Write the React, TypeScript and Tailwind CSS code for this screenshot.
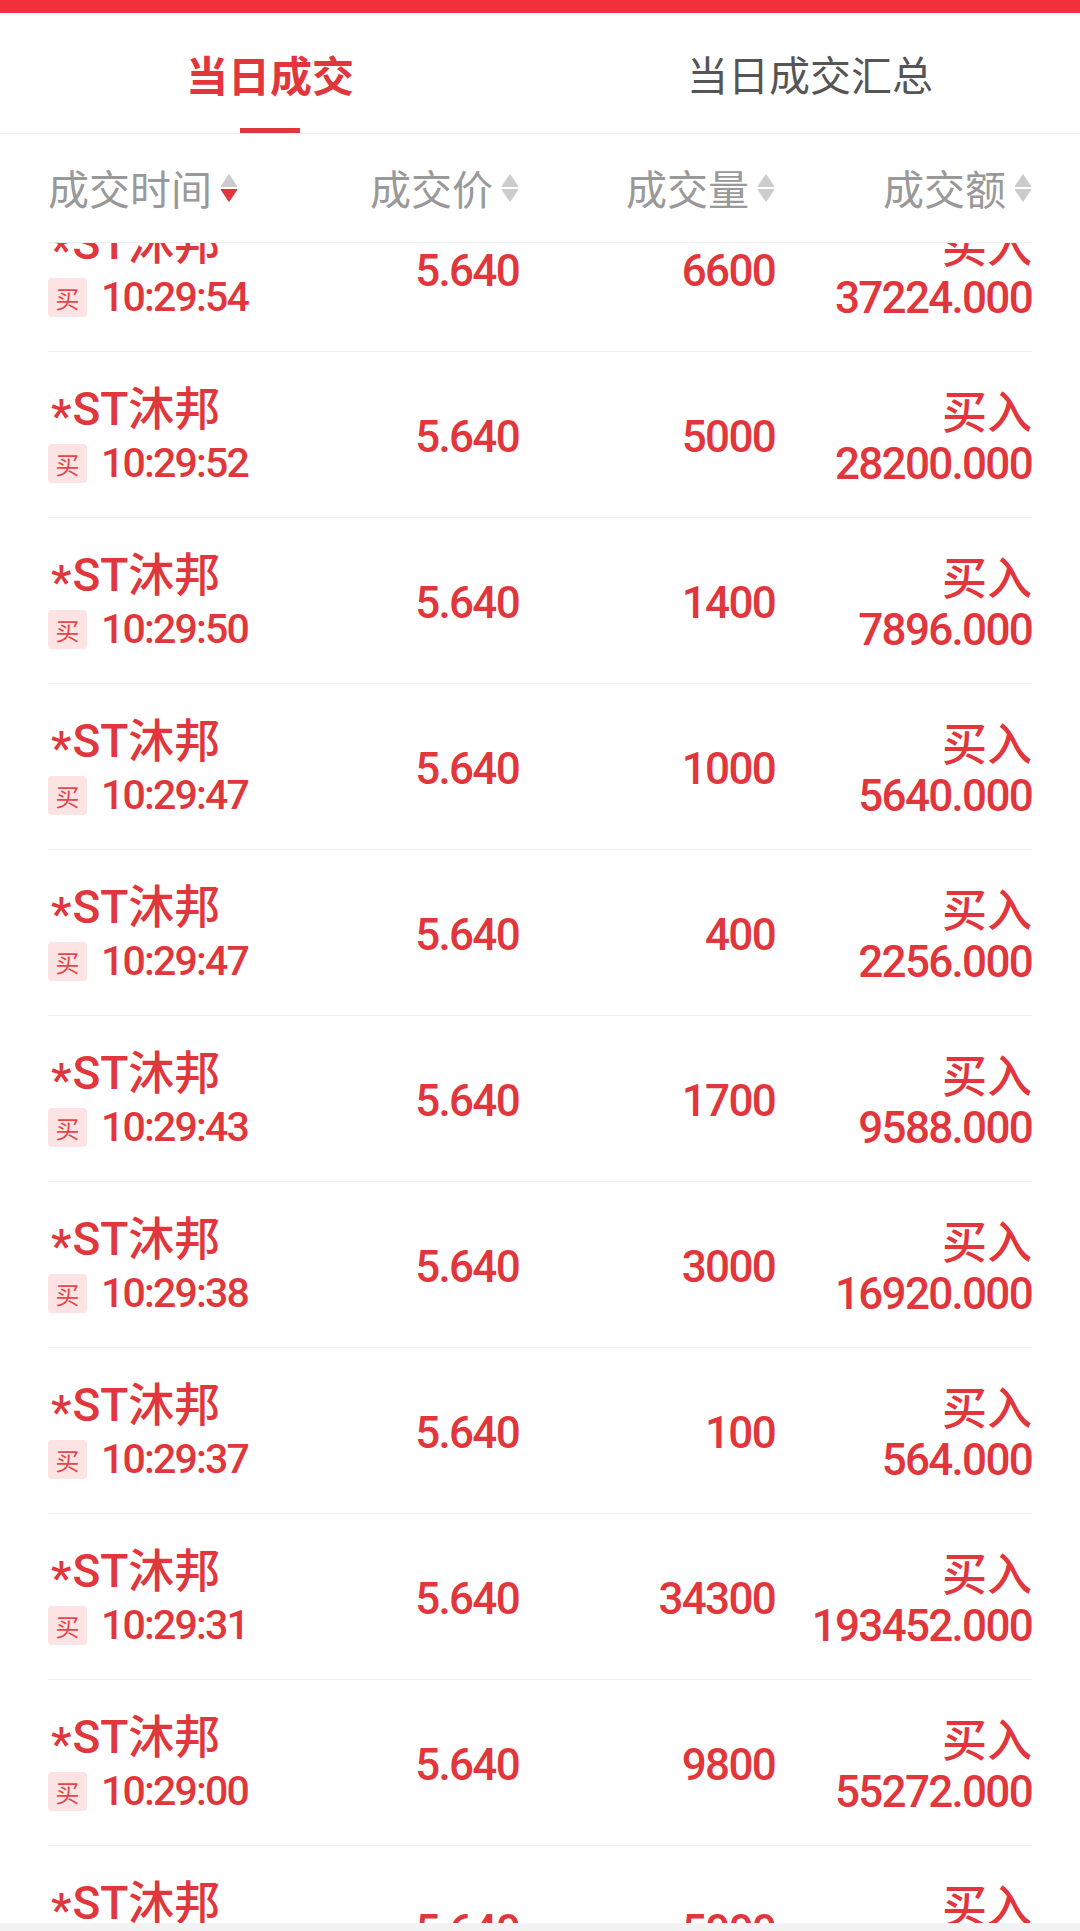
import React from "react";

const rows = [
  { time: "10:29:54", vol: "6600", amount: "37224.000" },
  { time: "10:29:52", vol: "5000", amount: "28200.000" },
  { time: "10:29:50", vol: "1400", amount: "7896.000" },
  { time: "10:29:47", vol: "1000", amount: "5640.000" },
  { time: "10:29:47", vol: "400", amount: "2256.000" },
  { time: "10:29:43", vol: "1700", amount: "9588.000" },
  { time: "10:29:38", vol: "3000", amount: "16920.000" },
  { time: "10:29:37", vol: "100", amount: "564.000" },
  { time: "10:29:31", vol: "34300", amount: "193452.000" },
  { time: "10:29:00", vol: "9800", amount: "55272.000" },
  { time: "10:28:58", vol: "5000", amount: "28200.000" },
];

const cjk = "font-['Noto_Sans_CJK_SC',sans-serif]";
const num = "font-['Roboto','Noto_Sans_CJK_SC',sans-serif]";

function SortIcon({ active }: { active?: boolean }) {
  return (
    <svg width="18" height="30" viewBox="0 0 18 30" className="ml-[8px] shrink-0">
      <path d="M9 1.5 L17 13.5 L1 13.5 Z" fill="#cccccc" strokeLinejoin="round" stroke="#cccccc" strokeWidth="1" />
      <path
        d="M1 16.5 L17 16.5 L9 28.5 Z"
        fill={active ? "#e0363c" : "#cccccc"}
        stroke={active ? "#e0363c" : "#cccccc"}
        strokeLinejoin="round"
        strokeWidth="1"
      />
    </svg>
  );
}

const cols = "grid grid-cols-[215px_256px_256px_257px]";

export default function App() {
  return (
    <div className="w-[1080px] h-[1931px] bg-white flex flex-col overflow-hidden">
      {/* status strip */}
      <div className="h-[13px] bg-[#f0313c] shrink-0" />

      {/* tabs */}
      <div className={`h-[121px] shrink-0 flex border-b border-[#eeeeee] ${cjk}`}>
        <div className="flex-1 flex flex-col items-center">
          <div className="flex-1 flex items-center pt-[6px] text-[42px] font-bold text-[#e0363c]">当日成交</div>
          <div className="h-[5px] w-[60px] bg-[#e0363c]" />
        </div>
        <div className="flex-1 flex flex-col items-center">
          <div className="flex-1 flex items-center pt-[6px] text-[41px] text-[#555555]">当日成交汇总</div>
          <div className="h-[5px]" />
        </div>
      </div>

      {/* column header */}
      <div className={`h-[109px] shrink-0 mx-12 border-b border-[#eeeeee] ${cols} items-center ${cjk} text-[41px] text-[#999999]`}>
        <div className="flex items-center">
          成交时间
          <SortIcon active />
        </div>
        <div className="flex items-center justify-end">
          成交价
          <SortIcon />
        </div>
        <div className="flex items-center justify-end">
          成交量
          <SortIcon />
        </div>
        <div className="flex items-center justify-end">
          成交额
          <SortIcon />
        </div>
      </div>

      {/* trade list */}
      <div className="flex-1 min-h-0 overflow-hidden">
        <div className="-mt-[57px]">
          {rows.map((r, i) => (
            <div key={i} className={`h-[166px] mx-12 pt-[4px] border-b border-[#eeeeee] ${cols} items-center text-[#e0363c]`}>
              <div className="flex flex-col">
                <div className={`h-[54px] flex items-center text-[46px] font-medium whitespace-nowrap ${num}`}>
                  <span className="inline-block translate-y-[7px] ml-[3px] mr-[1px]">*</span>
                  ST沐邦
                </div>
                <div className="h-[54px] flex items-center">
                  <span className={`w-[39px] h-[39px] rounded-[4px] bg-[#fde3e3] flex items-center justify-center text-[24px] text-[#e2474b] ${cjk}`}>
                    买
                  </span>
                  <span className={`ml-[14px] text-[41px] tracking-[-1.8px] font-medium ${num}`}>{r.time}</span>
                </div>
              </div>
              <div className={`text-right text-[44px] tracking-[-1.7px] font-medium ${num}`}>5.640</div>
              <div className={`text-right text-[44px] tracking-[-1.7px] font-medium ${num}`}>{r.vol}</div>
              <div className="flex flex-col items-end">
                <div className={`h-[54px] flex items-center text-[45px] font-medium ${cjk}`}>买入</div>
                <div className={`h-[54px] flex items-center text-[44px] tracking-[-1.7px] font-medium ${num}`}>{r.amount}</div>
              </div>
            </div>
          ))}
        </div>
      </div>

      {/* bottom bar */}
      <div className="h-[8px] shrink-0 bg-[#f2f2f2]" />
    </div>
  );
}
